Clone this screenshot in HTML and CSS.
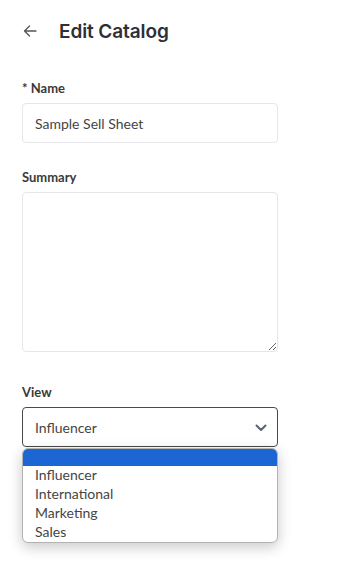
FILE: index.html
```html
<!DOCTYPE html>
<html lang="en">
<head>
<meta charset="utf-8">
<title>Edit Catalog</title>
<link rel="stylesheet" href="styles.css">
</head>
<body>
<div class="page">
  <header class="header">
    <svg class="back" width="14" height="12" viewBox="0 0 14 12" aria-hidden="true">
      <path d="M13 6H1.5M6.5 1L1.5 6L6.5 11" fill="none" stroke="#555" stroke-width="1.3" stroke-linecap="round" stroke-linejoin="round"/>
    </svg>
    <h1 class="title">Edit Catalog</h1>
  </header>

  <div class="field">
    <label class="label">* Name</label>
    <input class="input" type="text" value="Sample Sell Sheet">
  </div>

  <div class="field field-summary">
    <label class="label">Summary</label>
    <textarea class="textarea"></textarea>
  </div>

  <div class="field field-view">
    <label class="label">View</label>
    <div class="select-wrap">
      <div class="select">
        <span>Influencer</span>
        <svg class="chevron" width="12" height="8" viewBox="0 0 12 8" aria-hidden="true">
          <path d="M1.5 1.5L6 6L10.5 1.5" fill="none" stroke="#5b6170" stroke-width="2" stroke-linecap="round" stroke-linejoin="round"/>
        </svg>
      </div>
      <div class="menu">
        <div class="option selected"></div>
        <div class="option">Influencer</div>
        <div class="option">International</div>
        <div class="option">Marketing</div>
        <div class="option">Sales</div>
      </div>
    </div>
  </div>
</div>
</body>
</html>
```

FILE: styles.css
```css
html, body {
  margin: 0;
  padding: 0;
  background: #ffffff;
}

.page {
  width: 339px;
  height: 568px;
  padding: 0 0 0 22px;
  box-sizing: border-box;
  font-family: Lato, "Open Sans", sans-serif;
  color: #3b3b3b;
  overflow: hidden;
}

.header {
  display: flex;
  align-items: center;
  height: 60px;
  box-sizing: border-box;
  padding-top: 2px;
}

.back {
  margin-left: 1px;
  width: 14px;
  height: 12px;
}

.title {
  margin: 0 0 0 22px;
  font-family: Inter, "Open Sans", sans-serif;
  font-size: 19px;
  font-weight: 600;
  color: #2f2f35;
  letter-spacing: -0.1px;
}

.field {
  display: flex;
  flex-direction: column;
  width: 256px;
}

.label {
  margin-top: 20px;
  height: 16px;
  line-height: 16px;
  font-size: 13px;
  font-weight: 700;
  color: #3a3a3a;
  margin-bottom: 7px;
}

.field-summary .label {
  margin-top: 26px;
}

.field-view .label {
  margin-top: 32px;
}

.input {
  height: 40px;
  box-sizing: border-box;
  border: 1px solid #e6e6ea;
  border-radius: 4px;
  padding: 0 12px;
  font-family: Lato, "Open Sans", sans-serif;
  font-size: 14px;
  color: #454545;
  outline: none;
  margin: 0;
}

.textarea {
  display: block;
  height: 160px;
  box-sizing: border-box;
  border: 1px solid #e6e6ea;
  border-radius: 4px;
  margin: 0;
  padding: 8px 12px;
  resize: vertical;
  font-family: Lato, "Open Sans", sans-serif;
  font-size: 14px;
  outline: none;
}

.select-wrap {
  position: relative;
}

.select {
  height: 40px;
  box-sizing: border-box;
  border: 1px solid #4a4a4a;
  border-radius: 4px;
  padding: 0 10px 0 12px;
  display: flex;
  align-items: center;
  justify-content: space-between;
  font-size: 14px;
  color: #454545;
}

.chevron {
  width: 12px;
  height: 8px;
  margin-top: 1px;
}

.menu {
  position: absolute;
  top: 41px;
  left: 0;
  width: 256px;
  box-sizing: border-box;
  border: 1px solid #b3b3b3;
  border-radius: 6px;
  background: #ffffff;
  overflow: hidden;
  box-shadow: 0 4px 14px rgba(0, 0, 0, 0.22);
  padding-bottom: 0;
}

.option {
  height: 19px;
  line-height: 17px;
  padding-left: 12px;
  font-size: 14px;
  color: #454545;
}

.option.selected {
  height: 17px;
  background: #1b66d2;
}
```
